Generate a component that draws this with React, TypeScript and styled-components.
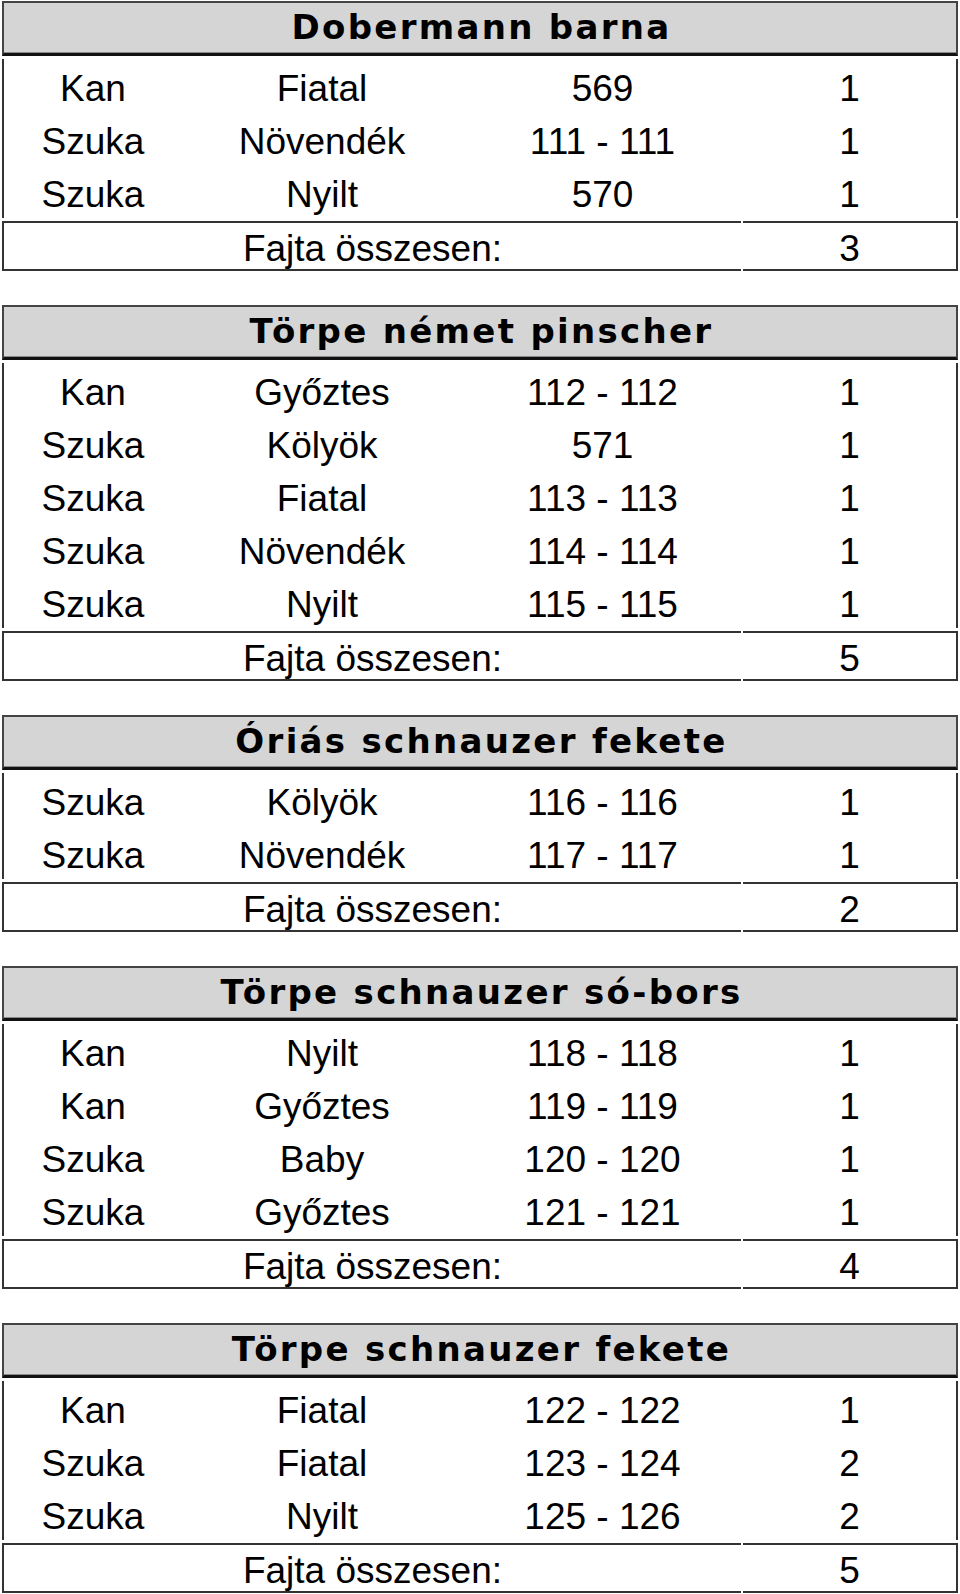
import React from 'react';
import styled, { createGlobalStyle } from 'styled-components';

const GlobalStyle = createGlobalStyle`
    html, body {
        margin: 0;
        padding: 0;
        background: #fff;
    }
    body {
        font-family: "Liberation Sans", Arial, sans-serif;
        color: #000;
    }
`;

type Row = [string, string, string, string];

interface Breed {
    name: string;
    rows: Row[];
    total: number;
}

const breeds: Breed[] = [
    {
        name: 'Dobermann barna',
        rows: [
            ['Kan', 'Fiatal', '569', '1'],
            ['Szuka', 'Növendék', '111 - 111', '1'],
            ['Szuka', 'Nyilt', '570', '1'],
        ],
        total: 3,
    },
    {
        name: 'Törpe német pinscher',
        rows: [
            ['Kan', 'Győztes', '112 - 112', '1'],
            ['Szuka', 'Kölyök', '571', '1'],
            ['Szuka', 'Fiatal', '113 - 113', '1'],
            ['Szuka', 'Növendék', '114 - 114', '1'],
            ['Szuka', 'Nyilt', '115 - 115', '1'],
        ],
        total: 5,
    },
    {
        name: 'Óriás schnauzer fekete',
        rows: [
            ['Szuka', 'Kölyök', '116 - 116', '1'],
            ['Szuka', 'Növendék', '117 - 117', '1'],
        ],
        total: 2,
    },
    {
        name: 'Törpe schnauzer só-bors',
        rows: [
            ['Kan', 'Nyilt', '118 - 118', '1'],
            ['Kan', 'Győztes', '119 - 119', '1'],
            ['Szuka', 'Baby', '120 - 120', '1'],
            ['Szuka', 'Győztes', '121 - 121', '1'],
        ],
        total: 4,
    },
    {
        name: 'Törpe schnauzer fekete',
        rows: [
            ['Kan', 'Fiatal', '122 - 122', '1'],
            ['Szuka', 'Fiatal', '123 - 124', '2'],
            ['Szuka', 'Nyilt', '125 - 126', '2'],
        ],
        total: 5,
    },
];

const Page = styled.div`
    width: 956px;
    padding: 1px 2px 0 2px;
    display: flex;
    flex-direction: column;
    gap: 34px;
`;

const Section = styled.section`
    display: flex;
    flex-direction: column;
    gap: 3px;
`;

const Header = styled.div`
    height: 50px;
    background: #d5d5d5;
    border: 2px solid #444;
    border-bottom: 3px solid #111;
    box-shadow: inset 0 -1px 0 #8a8a8a;
    text-align: center;
    font-family: "DejaVu Sans", Verdana, sans-serif;
    font-weight: bold;
    font-size: 34px;
    line-height: 49px;
    letter-spacing: 2.3px;
    padding-left: 3px;
    white-space: nowrap;
`;

const DataBlock = styled.div`
    border-left: 2px solid #333;
    border-right: 2px solid #333;
`;

const DataRow = styled.div`
    display: grid;
    grid-template-columns: 178px 280px 281px 1fr;
    height: 53px;
`;

const Cell = styled.div`
    text-align: center;
    font-size: 37px;
    padding-top: 6px;
    line-height: 47px;
    white-space: nowrap;
`;

const TotalRow = styled.div`
    display: grid;
    grid-template-columns: 739px 1fr;
    gap: 2px;
    height: 50px;
`;

const TotalCell = styled.div<{ $side: 'left' | 'right' }>`
    border-top: 2px solid #333;
    border-bottom: 2px solid #333;
    ${(p) => (p.$side === 'left' ? 'border-left: 2px solid #333;' : 'border-right: 2px solid #333;')}
    text-align: center;
    font-size: 37px;
    padding-top: 5px;
    line-height: 41px;
    white-space: nowrap;
`;

const BreedTable: React.FunctionComponent<{ breed: Breed }> = ({ breed }) => (
    <Section>
        <Header>{breed.name}</Header>
        <DataBlock>
            {breed.rows.map((row, i) => (
                <DataRow key={i}>
                    {row.map((value, j) => (
                        <Cell key={j}>{value}</Cell>
                    ))}
                </DataRow>
            ))}
        </DataBlock>
        <TotalRow>
            <TotalCell $side="left">Fajta összesen:</TotalCell>
            <TotalCell $side="right">{breed.total}</TotalCell>
        </TotalRow>
    </Section>
);

const App: React.FunctionComponent = (): JSX.Element => (
    <>
        <GlobalStyle />
        <Page>
            {breeds.map((breed) => (
                <BreedTable key={breed.name} breed={breed} />
            ))}
        </Page>
    </>
);

export default App;
